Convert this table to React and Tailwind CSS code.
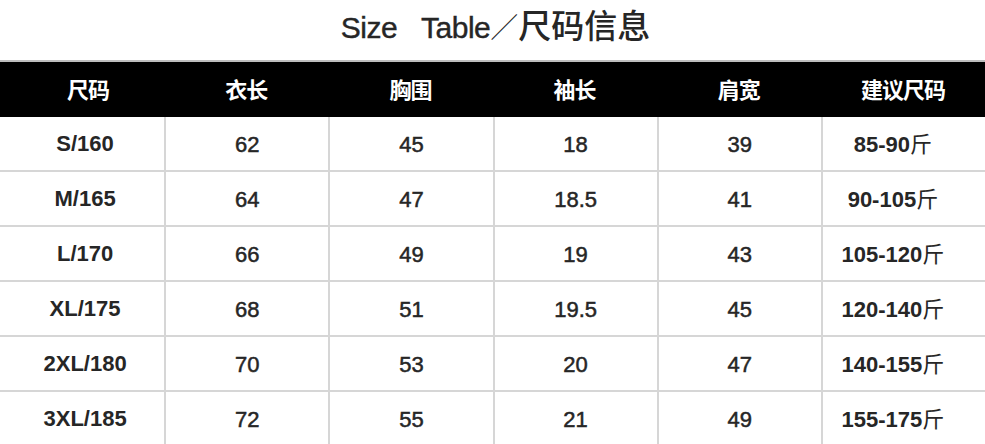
import React from "react";

const headers = ["尺码", "衣长", "胸围", "袖长", "肩宽", "建议尺码"];
const rows = [
  ["S/160", "62", "45", "18", "39", "85-90斤"],
  ["M/165", "64", "47", "18.5", "41", "90-105斤"],
  ["L/170", "66", "49", "19", "43", "105-120斤"],
  ["XL/175", "68", "51", "19.5", "45", "120-140斤"],
  ["2XL/180", "70", "53", "20", "47", "140-155斤"],
  ["3XL/185", "72", "55", "21", "49", "155-175斤"],
];

export default function App() {
  return (
    <div className="w-[985px] h-[444px] overflow-hidden bg-white font-['Liberation_Sans','Noto_Sans_CJK_SC',sans-serif]">
      <div className="h-[60px] flex justify-center pt-[4px] pl-[6px]">
        <div className="h-[40px] leading-[40px] text-[#262626] text-[30px] flex items-baseline">
          <span className="tracking-[-0.5px] [-webkit-text-stroke:0.4px_#262626]">Size</span>
          <span className="ml-[24px] tracking-[-0.5px] [-webkit-text-stroke:0.4px_#262626]">Table</span>
          <span className="font-['Noto_Sans_CJK_SC',sans-serif] text-[28px] font-light">／</span>
          <span className="font-['Noto_Sans_CJK_SC',sans-serif] text-[33px] font-medium">尺码信息</span>
        </div>
      </div>
      <div className="border-t-2 border-[#bdbdbd]">
        <div className="grid grid-cols-6 h-[55px] bg-black">
          {headers.map((h, j) => (
            <div
              key={h}
              className={
                "flex items-center justify-center text-white text-[22px] font-bold font-['Noto_Sans_CJK_SC',sans-serif] pb-[2px] tracking-[-1px] " +
                (j === 0 ? "pl-[12px]" : "")
              }
            >
              {h}
            </div>
          ))}
        </div>
        {rows.map((r, i) => (
          <div key={i} className="grid grid-cols-6 h-[55px] border-b-2 border-[#d6d6d6]">
            {r.map((c, j) => (
              <div
                key={j}
                className={
                  "flex items-center justify-center text-[22px] text-[#262626] " +
                  (j > 0 ? "border-l-2 border-[#d6d6d6] " : "") +
                  (j === 0 ? "font-bold pl-[6px] " : "") +
                  (j === 5 ? "font-bold pr-[22px] " : "") +
                  (j > 0 && j < 5 ? "[-webkit-text-stroke:0.5px_#262626] pt-[2px] " : "")
                }
              >
                {j === 5 ? (
                  <span>
                    {c.slice(0, -1)}
                    <span className="font-['Noto_Sans_CJK_SC',sans-serif] font-normal">斤</span>
                  </span>
                ) : (
                  c
                )}
              </div>
            ))}
          </div>
        ))}
      </div>
    </div>
  );
}
